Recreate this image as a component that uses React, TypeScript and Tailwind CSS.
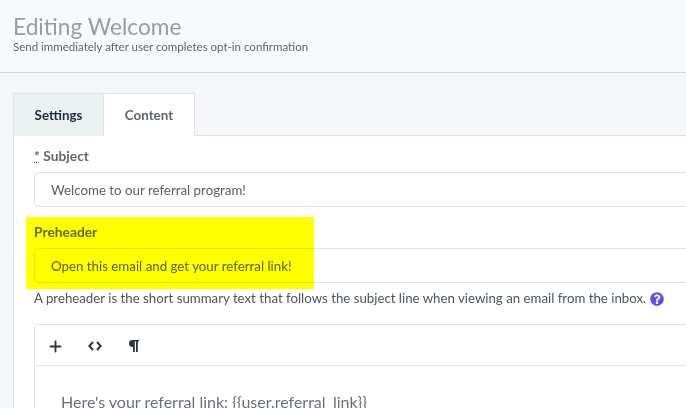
import { Plus } from "lucide-react";

function Field({ label, value }: { label: React.ReactNode; value: string }) {
  return (
    <div>
      <div className="h-[26px] text-[13.8px] leading-[20px] font-bold text-[#626a6e]">{label}</div>
      <div className="h-[35px] w-[700px] flex items-center pl-[16px] pt-[2px] rounded-[4px] border border-[#dce6ea] bg-white text-[13.3px] text-[#56606a]">
        {value}
      </div>
    </div>
  );
}

export default function App() {
  return (
    <div className="relative w-[686px] h-[408px] overflow-hidden bg-[#f4f6fa] font-['Lato',sans-serif]">
      <header className="h-[73px] pt-[12px] pl-[13px] bg-[#f8f9fc] border-b border-[#c9dae8]">
        <h1 className="text-[22.7px] leading-[30px] text-[#999da0]">Editing Welcome</h1>
        <p className="text-[11.5px] leading-[9px] text-[#5a6670]">Send immediately after user completes opt-in confirmation</p>
      </header>

      <div className="pt-[20px] pl-[13px]">
        <div className="flex h-[43px] w-[700px] border-b border-[#dfe3e6]">
          <div className="w-[91px] h-[43px] flex items-center justify-center bg-[#ebf0f0] border-t border-l border-r border-[#dfe3e6] text-[13.4px] font-bold text-[#1f2d3a]">
            Settings
          </div>
          <div className="w-[91px] h-[43px] flex items-center justify-center bg-white border-t border-r border-[#dfe3e6] text-[13.4px] font-bold text-[#5c646b]">
            Content
          </div>
        </div>

        <div className="w-[700px] h-[300px] bg-white border-l border-[#dfe3e6] pl-[20px] pt-[10px]">
          <Field
            label={
              <>
                <span className="underline decoration-dotted">*</span> Subject
              </>
            }
            value="Welcome to our referral program!"
          />
          <div className="mt-[15px]">
            <Field label="Preheader" value="Open this email and get your referral link!" />
          </div>
          <p className="mt-[1px] h-[30px] flex items-center gap-[4px] whitespace-nowrap text-[13.26px] text-[#4a5560]">
            A preheader is the short summary text that follows the subject line when viewing an email from the inbox.
            <svg viewBox="0 0 512 512" className="w-[14px] h-[14px]" fill="#5b4df0">
              <path d="M504 256c0 137-111 248-248 248S8 393 8 256 119 8 256 8s248 111 248 248zM263 90c-54 0-89 23-116 63-4 5-3 12 3 16l35 26c5 4 13 3 17-2 18-23 30-36 57-36 20 0 45 13 45 33 0 15-12 23-33 34-24 14-55 31-55 73v7c0 7 5 12 12 12h56c7 0 12-5 12-12v-4c0-29 85-31 85-109 0-59-61-101-118-101zm-7 252c-26 0-47 21-47 47s21 47 47 47 47-21 47-47-21-47-47-47z" />
            </svg>
          </p>
          <div className="mt-[10px] w-[700px] border border-[#e2e6e8] rounded-t-[3px]">
            <div className="h-[41px] pt-[2px] flex items-center border-b border-[#e2e6e8] text-[#2b3440]">
              <Plus size={17} strokeWidth={2.6} className="ml-[12px]" />
              <svg viewBox="0 0 14 10" className="ml-[24px] w-[14px] h-[10px]" fill="none" stroke="currentColor" strokeWidth="2">
                <path d="M5 1 1.4 5 5 9M9 1l3.6 4L9 9" />
              </svg>
              <svg viewBox="0 0 11 12" className="ml-[26px] w-[11px] h-[12px]" fill="currentColor">
                <path d="M4.5 0H11v1.6H9.8V12H8V1.6H6.8V12H5V7H4.5a3.5 3.5 0 0 1 0-7z" />
              </svg>
            </div>
            <div className="pl-[26px] pt-[24px] text-[16px] leading-[24px] text-[#6a7075]">
              Here's your referral link: {"{{user.referral_link}}"}
            </div>
          </div>
        </div>
      </div>

      {/* yellow highlighter mark sitting over the preheader field */}
      <div className="absolute left-[26px] top-[217px] w-[288px] h-[72px] bg-[#ffff00] mix-blend-multiply" />
    </div>
  );
}
